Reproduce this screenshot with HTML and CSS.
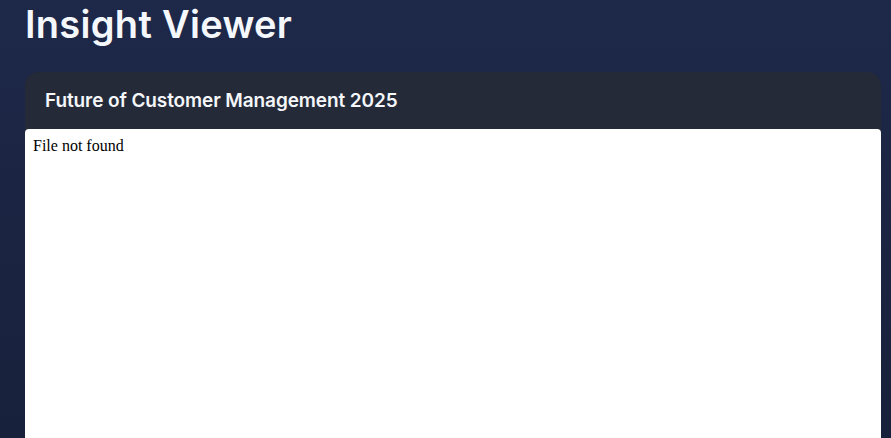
FILE: index.html
```html
<!DOCTYPE html>
<html>
<head>
<meta charset="utf-8">
<link rel="stylesheet" href="styles.css">
</head>
<body>
<div class="page">
  <h1 class="title">Insight Viewer</h1>
  <section class="card">
    <header class="card-head">Future of Customer Management 2025</header>
    <div class="frame"><div class="frame-body">File not found</div></div>
  </section>
</div>
</body>
</html>
```

FILE: styles.css
```css
html, body {
  margin: 0;
  height: 100%;
}
body {
  background: linear-gradient(180deg, #1e2849 0%, #18213b 100%);
  font-family: Inter, "Open Sans", sans-serif;
  overflow: hidden;
}
.page {
  padding: 0 10px 0 25px;
}
.title {
  margin: 0;
  padding-top: 2px;
  height: 72px;
  box-sizing: border-box;
  font-size: 38px;
  font-weight: 600;
  line-height: 44px;
  color: #f4f7fb;
  letter-spacing: 0.3px;
}
.card {
  border-radius: 14px 14px 0 0;
  background: #242a38;
  overflow: hidden;
}
.card-head {
  height: 57px;
  box-sizing: border-box;
  padding: 17px 20px 0;
  font-size: 19px;
  font-weight: 600;
  line-height: 24px;
  color: #f4f6fa;
  letter-spacing: -0.1px;
}
.frame {
  background: #fff;
  height: 320px;
  border-radius: 4px 4px 0 0;
}
.frame-body {
  padding: 8px;
  font-family: "Liberation Serif", serif;
  font-size: 16px;
  line-height: 18px;
  color: #000;
}
```
